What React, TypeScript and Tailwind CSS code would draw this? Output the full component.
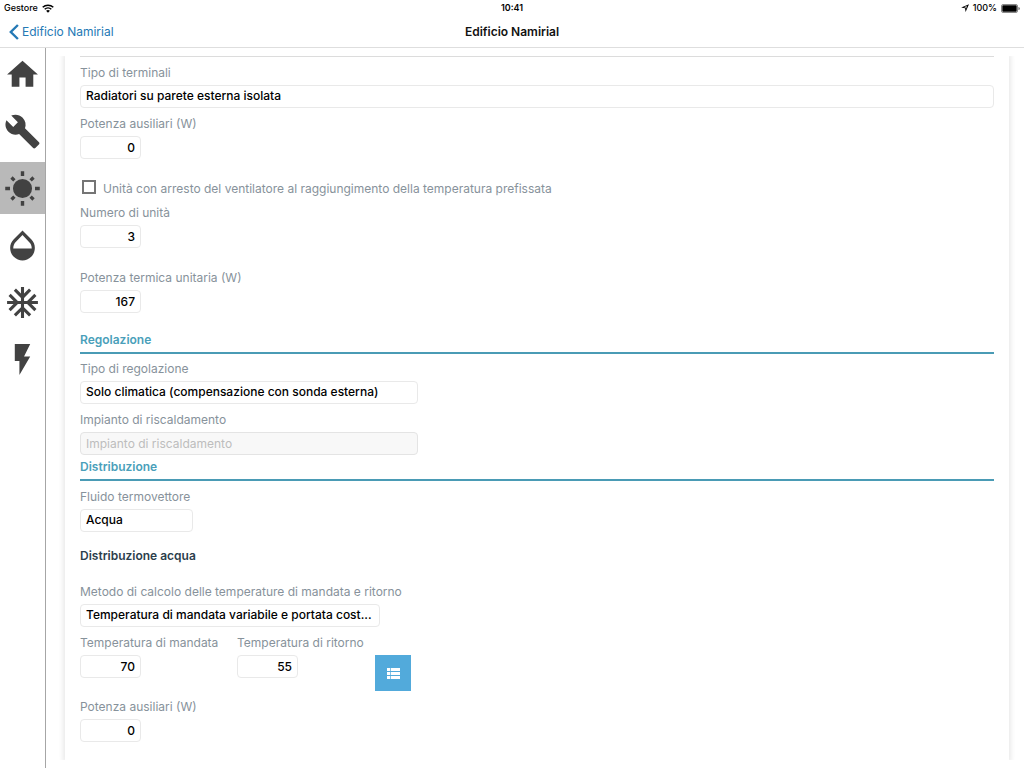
import type { ReactNode } from "react";

const navItems = [
  { label: "Edificio", d: "M10 20v-6h4v6h5v-8h3L12 3 2 12h3v8z" },
  {
    label: "Impianti",
    d: "M22.7 19l-9.1-9.1c.9-2.3.4-5-1.5-6.9-2-2-5-2.4-7.4-1.3L9 6 6 9 1.6 4.7C.4 7.1.9 10.1 2.9 12.1c1.9 1.9 4.6 2.4 6.9 1.5l9.1 9.1c.4.4 1 .4 1.4 0l2.3-2.3c.5-.4.5-1.1.1-1.4z",
  },
  {
    label: "Riscaldamento",
    active: true,
    d: "M12 5.8a6.2 6.2 0 1 0 0 12.4 6.2 6.2 0 0 0 0-12.4zM10.9.8h2.2v3.1h-2.2zM10.9 20.1h2.2v3.1h-2.2zM.8 10.9h3.1v2.2H.8zM20.1 10.9h3.1v2.2h-3.1zM4.1 5.6l1.5-1.5 1.9 1.9L6 7.5zM18.4 4.1l1.5 1.5L18 7.5 16.5 6zM16.5 18l1.5-1.5 1.9 1.9-1.5 1.5zM6 16.5L7.5 18l-1.9 1.9-1.5-1.5z",
  },
  {
    label: "Acqua calda",
    d: "M17.66 8L12 2.35 6.34 8C4.78 9.56 4 11.64 4 13.64s.78 4.11 2.34 5.67 3.61 2.35 5.66 2.35 4.1-.79 5.66-2.35S20 15.64 20 13.64 19.22 9.56 17.66 8zM6 14c.01-2 .62-3.27 1.76-4.4L12 5.27l4.24 4.38C17.38 10.77 17.99 12 18 14H6z",
  },
  {
    label: "Raffrescamento",
    d: "M22 11h-4.17l3.24-3.24-1.41-1.42L15 11h-2V9l4.66-4.66-1.42-1.41L13 6.17V2h-2v4.17L7.76 2.93 6.34 4.34 11 9v2H9L4.34 6.34 2.93 7.76 6.17 11H2v2h4.17l-3.24 3.24 1.41 1.42L9 13h2v2l-4.66 4.66 1.42 1.41L11 17.83V22h2v-4.17l3.24 3.24 1.42-1.41L13 15v-2h2l4.66 4.66 1.41-1.42L17.83 13H22z",
  },
  { label: "Elettricità", d: "M7 2v11h3v9l7-12h-4l4-8z" },
];

const boxClass =
  "block h-[23px] rounded border border-[#e9e9e9] bg-white px-[5px] pb-px text-xs leading-5 font-medium text-black outline-none";

function Field({ id, label, children }: { id: string; label: string; children: ReactNode }) {
  return (
    <div className="flex flex-col items-start gap-0.5">
      <label htmlFor={id} className="text-xs leading-5 whitespace-nowrap text-[#87929b]">
        {label}
      </label>
      {children}
    </div>
  );
}

function NumberField({ id, label, value }: { id: string; label: string; value: string }) {
  return (
    <Field id={id} label={label}>
      <input id={id} type="text" inputMode="numeric" defaultValue={value} className={`${boxClass} w-[61px] text-right`} />
    </Field>
  );
}

function SelectField({ id, label, value, width }: { id: string; label: string; value: string; width: string }) {
  return (
    <Field id={id} label={label}>
      <select id={id} defaultValue={value} className={`${boxClass} ${width} appearance-none`}>
        <option>{value}</option>
      </select>
    </Field>
  );
}

function SectionTitle({ children }: { children: ReactNode }) {
  return (
    <h2 className="border-b-2 border-[#4a9bb5] pb-0.5 text-xs leading-5 font-semibold text-[#4a9fba]">{children}</h2>
  );
}

export default function App() {
  return (
    <div className="flex h-screen flex-col bg-white font-['Inter','Liberation_Sans',sans-serif]">
      <header className="border-b border-[#dedede]">
        <div className="grid h-4 grid-cols-3 items-center px-1 text-[9px] leading-4 font-medium text-black">
          <div className="flex items-center gap-1">
            <span>Gestore</span>
            <svg viewBox="0 0 12 9" className="h-[9px] w-3" fill="none" stroke="currentColor" strokeWidth="1.5">
              <path d="M.7 3.3C3.7.4 8.3.4 11.3 3.3M2.7 5.3C4.6 3.5 7.4 3.5 9.3 5.3" />
              <path d="M6 8.7L4.1 6.8C5.2 5.8 6.8 5.8 7.9 6.8z" fill="currentColor" stroke="none" />
            </svg>
          </div>
          <span className="text-center font-semibold">10:41</span>
          <div className="flex items-center justify-end gap-1">
            <svg viewBox="0 0 8 8" className="size-2" fill="currentColor">
              <path fillRule="evenodd" d="M8 .3L4.6 8 4 4.2.2 3.6zM5.8 2.1L3 3.2l1.7.3.3 1.4z" />
            </svg>
            <span>100%</span>
            <svg viewBox="0 0 19 9" className="h-[9px] w-[19px]">
              <rect x=".5" y=".5" width="16" height="8" rx="1.5" fill="#fff" stroke="#8a8a8a" />
              <rect x="1.3" y="1.3" width="14.4" height="6.4" rx=".8" />
              <path d="M17.4 3a1.5 1.5 0 0 1 0 3z" fill="#777" />
            </svg>
          </div>
        </div>
        <div className="grid h-[31px] grid-cols-3 items-center">
          <a href="#edificio" className="flex items-center gap-[3px] pl-[9px] text-xs leading-5 text-[#2479b5]">
            <svg viewBox="0 0 10 16" className="h-4 w-2.5" fill="none" stroke="currentColor" strokeWidth="2.4">
              <path d="M8.9 1L1.8 8l7.1 7" />
            </svg>
            Edificio Namirial
          </a>
          <h1 className="text-center text-xs leading-5 font-semibold text-[#111]">Edificio Namirial</h1>
        </div>
      </header>

      <div className="flex min-h-0 flex-1">
        <nav className="flex w-[46px] shrink-0 flex-col gap-[5px] border-r border-[#a6a6a6]">
          {navItems.map((item) => (
            <button
              key={item.label}
              type="button"
              aria-label={item.label}
              className={`flex h-[52px] w-full items-center justify-center text-[#424242] ${item.active ? "bg-[#b9b9b9]" : ""}`}
            >
              <svg viewBox="0 0 24 24" className="size-[37px]" fill="currentColor">
                <path d={item.d} />
              </svg>
            </button>
          ))}
        </nav>

        <main className="my-2 min-w-0 flex-1 overflow-hidden pr-[15px] pl-[19px]">
          <form className="h-full px-[15px] shadow-[0_0_5px_2px_#e9e9e9]">
            <div className="border-t border-[#dcdcdc] pt-1.5">
              <div className="flex flex-col gap-1.5">
                <SelectField id="terminali" label="Tipo di terminali" value="Radiatori su parete esterna isolata" width="w-full" />
                <NumberField id="ausiliari" label="Potenza ausiliari (W)" value="0" />
              </div>
              <div className="mt-5 mb-1 flex items-center gap-[7px]">
                <input
                  id="arresto"
                  type="checkbox"
                  className="mb-1 ml-0.5 size-3.5 appearance-none border-2 border-[#757575] bg-white checked:bg-[#757575]"
                />
                <label htmlFor="arresto" className="text-xs leading-5 text-[#87929b]">
                  Unità con arresto del ventilatore al raggiungimento della temperatura prefissata
                </label>
              </div>
              <div className="flex flex-col gap-5">
                <NumberField id="numero" label="Numero di unità" value="3" />
                <NumberField id="termica" label="Potenza termica unitaria (W)" value="167" />
              </div>
            </div>

            <section className="mt-[17px]">
              <SectionTitle>Regolazione</SectionTitle>
              <div className="mt-[5px] flex flex-col gap-1.5">
                <SelectField id="regolazione" label="Tipo di regolazione" value="Solo climatica (compensazione con sonda esterna)" width="w-[338px]" />
                <Field id="impianto" label="Impianto di riscaldamento">
                  <input
                    id="impianto"
                    type="text"
                    disabled
                    placeholder="Impianto di riscaldamento"
                    className="block h-[23px] w-[338px] rounded border border-[#e4e4e4] bg-[#f8f8f8] px-[5px] pb-px text-xs leading-5 placeholder:text-[#bdbdbd]"
                  />
                </Field>
              </div>
            </section>

            <section className="mt-0.5">
              <SectionTitle>Distribuzione</SectionTitle>
              <div className="mt-1.5">
                <SelectField id="fluido" label="Fluido termovettore" value="Acqua" width="w-[113px]" />
              </div>
              <h3 className="mt-3.5 mb-4 text-xs leading-5 font-semibold text-[#2c3e4c]">Distribuzione acqua</h3>
              <div className="flex flex-col gap-1.5">
                <SelectField
                  id="metodo"
                  label="Metodo di calcolo delle temperature di mandata e ritorno"
                  value="Temperatura di mandata variabile e portata cost..."
                  width="w-[300px]"
                />
                <div className="flex items-start">
                  <div className="w-[157px]">
                    <NumberField id="mandata" label="Temperatura di mandata" value="70" />
                  </div>
                  <div className="w-[138px]">
                    <NumberField id="ritorno" label="Temperatura di ritorno" value="55" />
                  </div>
                  <button type="button" aria-label="Elenco" className="mt-[22px] flex size-9 items-center justify-center bg-[#52aadb] text-white">
                    <svg viewBox="0 0 13 11" className="h-[11px] w-[13px]" fill="currentColor">
                      <path d="M0 0h3v3H0zM3.7 0H13v3H3.7zM0 4h3v3H0zM3.7 4H13v3H3.7zM0 8h3v3H0zM3.7 8H13v3H3.7z" />
                    </svg>
                  </button>
                </div>
                <NumberField id="ausiliari-acqua" label="Potenza ausiliari (W)" value="0" />
              </div>
            </section>
          </form>
        </main>
      </div>
    </div>
  );
}
